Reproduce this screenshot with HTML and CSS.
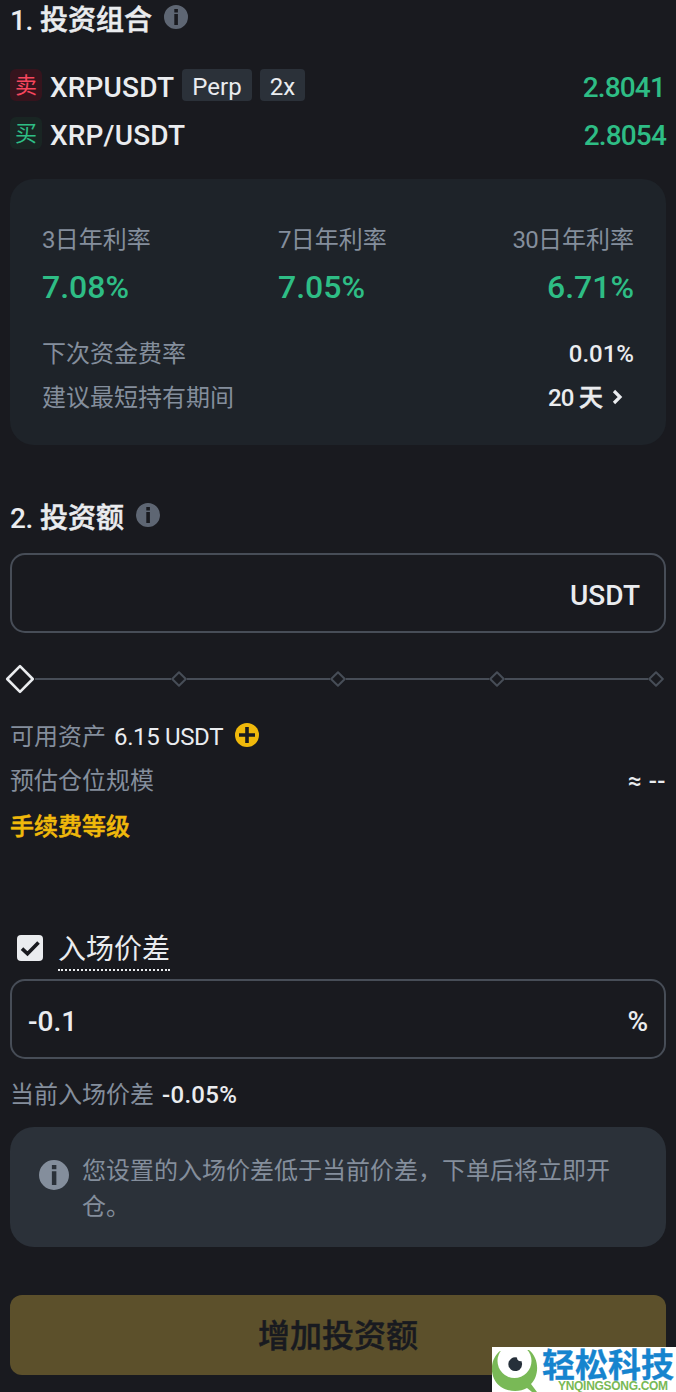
FILE: index.html
```
<!DOCTYPE html>
<html lang="zh-CN">
<head>
<meta charset="utf-8">
<title>投资组合</title>
<link rel="stylesheet" href="styles.css">
</head>
<body>
<svg class="defs" aria-hidden="true">
  <symbol id="info" viewBox="0 0 24 24"><path fill-rule="evenodd" d="M12 0a12 12 0 1 1 0 24a12 12 0 0 1 0-24zM10.3 4v3.4h3.6V4zM10.3 9v11h3.6V9z"/></symbol>
  <symbol id="diamond" viewBox="0 0 16 16"><path d="M8 1.2 14.8 8 8 14.8 1.2 8z"/></symbol>
</svg>
<main class="panel">
  <h2 class="title title-first"><span class="num">1.</span><span class="heavy">投资组合</span><svg class="info"><use href="#info"/></svg></h2>
  <section class="pairs">
    <div class="pair"><span class="side sell">卖</span><span class="symbol perp">XRPUSDT</span><span class="tag tag-perp">Perp</span><span class="tag tag-lev">2x</span><span class="price price-sell">2.8041</span></div>
    <div class="pair"><span class="side buy">买</span><span class="symbol spot">XRP/USDT</span><span class="price">2.8054</span></div>
  </section>
  <section class="rates">
    <div class="apr">
      <div><p class="label"><span class="digits">3</span>日年利率</p><p class="value">7.08%</p></div>
      <div><p class="label"><span class="digits">7</span>日年利率</p><p class="value">7.05%</p></div>
      <div class="end"><p class="label"><span class="digits">30</span>日年利率</p><p class="value">6.71%</p></div>
    </div>
    <div class="row"><span>下次资金费率</span><b class="strong">0.01%</b></div>
    <div class="row"><span>建议最短持有期间</span><b class="strong days"><span class="n20">20</span><span class="heavy">天</span><svg class="chevron" viewBox="0 0 12 16"><path d="M2 2l6 6L2 14"/></svg></b></div>
  </section>
  <h2 class="title title-second"><span class="num">2.</span><span class="heavy">投资额</span><svg class="info"><use href="#info"/></svg></h2>
  <div class="field"><span></span><span class="unit">USDT</span></div>
  <div class="slider">
    <svg class="thumb" viewBox="0 0 30 30"><path d="M15 2.2 27.8 15 15 27.8 2.2 15z"/></svg>
    <i class="track first"></i><svg class="stop"><use href="#diamond"/></svg>
    <i class="track"></i><svg class="stop"><use href="#diamond"/></svg>
    <i class="track"></i><svg class="stop"><use href="#diamond"/></svg>
    <i class="track"></i><svg class="stop"><use href="#diamond"/></svg>
  </div>
  <div class="line assets"><span>可用资产</span><span class="balance">6.15 USDT</span><svg class="plus" viewBox="0 0 24 24"><circle cx="12" cy="12" r="12"/><path d="M12 4v16M4 12h16"/></svg></div>
  <div class="line size"><span>预估仓位规模</span><span class="approx">≈ --</span></div>
  <div class="line fee heavy">手续费等级</div>
  <div class="check"><svg class="box" viewBox="0 0 26 26"><rect width="26" height="26" rx="4"/><path d="M5 13.6l5.500 5.200L21.500 7.600"/></svg><span class="check-label">入场价差</span></div>
  <div class="field"><span class="spread">-0.1</span><span class="percent">%</span></div>
  <div class="line current"><span>当前入场价差</span><b class="strong cur-value">-0.05%</b></div>
  <div class="notice"><svg class="notice-icon"><use href="#info"/></svg><p>您设置的入场价差低于当前价差，下单后将立即开仓。</p></div>
  <button class="submit heavy">增加投资额</button>
</main>
<aside class="mark">
  <svg class="eye" viewBox="0 0 48 45"><path class="green" d="M8 4C-4 14-2 33 9 40c8 5 19 5 26 1l5 4h5l-6-8C47 29 48 12 37 3z"/><circle class="white" cx="22.500" cy="14" r="17"/><path class="pupil" d="M25 10.500a3.500 3.500 0 0 0 4.400 3.600A6.900 6.900 0 1 1 25 10.500z"/></svg>
  <div class="mark-text"><span class="brand">轻松科技</span><span class="site">YNQINGSONG.COM</span></div>
</aside>
</body>
</html>
```
FILE: styles.css
```
* { box-sizing: border-box; }
body { margin: 0; background: #191a1f; color: #eaecef; font-family: Roboto, "Noto Sans CJK SC", sans-serif; font-size: 24px; width: 676px; height: 1392px; overflow: hidden; position: relative; }
p, h2 { margin: 0; }
svg { display: block; flex: none; }
.defs { position: absolute; width: 0; height: 0; }
.panel { padding: 0 10px; display: flex; flex-direction: column; }
.heavy { -webkit-text-stroke: 0.5px currentColor; }
.title { display: flex; align-items: center; height: 40px; font-size: 28px; line-height: 40px; font-weight: 500; padding-top: 2px; }
.num { width: 30px; letter-spacing: -0.5px; }
.info { width: 24px; height: 24px; margin: -8px 0 0 12px; fill: #5e6673; }
.pairs { margin-top: 23px; }
.pair { display: flex; align-items: center; height: 48px; font-size: 28px; font-weight: 500; line-height: 48px; }
.side { width: 32px; height: 32px; border-radius: 6px; font-size: 22px; line-height: 34px; text-align: center; margin: -4px 8px 0 0; font-weight: 400; }
.sell { background: #35141d; color: #f6465d; }
.buy { background: #192523; color: #2ebd85; }
.tag { height: 32px; margin-top: -4px; line-height: 36px; background: #2b3139; border-radius: 4px; font-size: 24px; font-weight: 400; text-align: center; }
.symbol { padding-top: 1px; letter-spacing: 0.15px; }
.perp { width: 132px; }
.tag-perp { width: 70px; margin-right: 8px; }
.tag-lev { width: 45px; }
.price { margin-left: auto; color: #2ebd85; letter-spacing: -0.85px; padding-top: 1px; }
.price-sell { margin-right: 1px; }
.rates { height: 266px; margin-top: 20px; border-radius: 24px; background: #1e2329; padding: 41px 32px 0; color: #848e9c; }
.apr { display: grid; grid-template-columns: 236px 1fr auto; height: 112px; }
.label { height: 41px; line-height: 41px; }
.digits { letter-spacing: -0.8px; }
.value { height: 52px; line-height: 52px; font-size: 32px; font-weight: 500; color: #2ebd85; }
.end { text-align: right; }
.row { display: flex; justify-content: space-between; height: 44px; line-height: 44px; }
.strong { color: #eaecef; font-weight: 500; }
.days { display: flex; align-items: center; }
.n20 { width: 31px; letter-spacing: -0.8px; }
.chevron { width: 12px; height: 16px; margin: -3px 10px 0 9px; fill: none; stroke: #eaecef; stroke-width: 3.200; }
.title-second { margin-top: 53px; }
.field { height: 80px; border: 2px solid #474d57; border-radius: 15px; padding: 5px 16px 0; display: flex; align-items: center; justify-content: space-between; font-size: 28px; font-weight: 500; }
.title-second + .field { margin-top: 15px; }
.unit { margin-right: 8px; }
.slider { height: 30px; margin: 31px -6px 0 -5px; width: 669px; display: flex; align-items: center; }
.thumb { width: 30px; height: 30px; fill: none; stroke: #eaecef; stroke-width: 2.600; stroke-linejoin: round; }
.track { flex: none; width: 143px; height: 2px; background: #474d57; }
.track.first { width: 136px; }
.stop { width: 16px; height: 16px; fill: none; stroke: #474d57; stroke-width: 2; stroke-linejoin: round; }
.line { display: flex; align-items: center; height: 44px; line-height: 44px; color: #848e9c; }
.assets { margin-top: 21px; }
.balance { color: #eaecef; margin-left: 8px; width: 121px; white-space: nowrap; letter-spacing: -0.35px; }
.plus { width: 24px; height: 24px; margin-top: -4px; fill: #f0b90b; stroke: none; }
.plus path { stroke: #191a1f; stroke-width: 3.600; }
.size { justify-content: space-between; }
.approx { color: #eaecef; font-weight: 500; letter-spacing: 0.5px; }
.fee { color: #f0b90b; font-weight: 500; height: 48px; line-height: 48px; }
.check { display: flex; margin-top: 77px; height: 43px; align-items: flex-start; padding-left: 7px; }
.box { width: 26px; height: 26px; margin: 7px 15px 0 0; fill: #eaecef; }
.box path { fill: none; stroke: #191a1f; stroke-width: 3.600; }
.check-label { font-size: 28px; line-height: 43px; height: 43px; border-bottom: 2px dotted #eaecef; }
.check + .field { margin-top: 8px; }
.current { margin-top: 14px; }
.cur-value { margin-left: 8px; letter-spacing: 0.3px; }
.notice { height: 120px; margin-top: 10px; border-radius: 24px; background: #2b3139; color: #848e9c; display: flex; padding: 26px 40px 0 29px; line-height: 36px; }
.notice-icon { width: 30px; height: 30px; fill: #848e9c; margin: 7px 13px 0 0; }
.submit { margin-top: 48px; height: 80px; border: 0; border-radius: 12px; background: #5c502b; color: #181a20; font: 500 32px/77px Roboto, "Noto Sans CJK SC", sans-serif; padding: 3px 0 0; }
.mark { position: absolute; left: 492px; top: 1347px; width: 184px; height: 45px; background: #fff; display: flex; overflow: hidden; }
.eye { width: 48px; height: 45px; }
.green { fill: #79b956; }
.white { fill: #fff; }
.pupil { fill: #26303a; }
.mark-text { display: flex; flex-direction: column; white-space: nowrap; }
.brand { font: 700 33px/33px "Noto Sans CJK SC", sans-serif; color: #1684ce; height: 33px; margin-left: 2px; -webkit-text-stroke: 0.3px currentColor; }
.site { font: bold 12px/12px "Liberation Sans", sans-serif; color: #79b956; letter-spacing: -0.3px; margin-left: 18px; }
```
